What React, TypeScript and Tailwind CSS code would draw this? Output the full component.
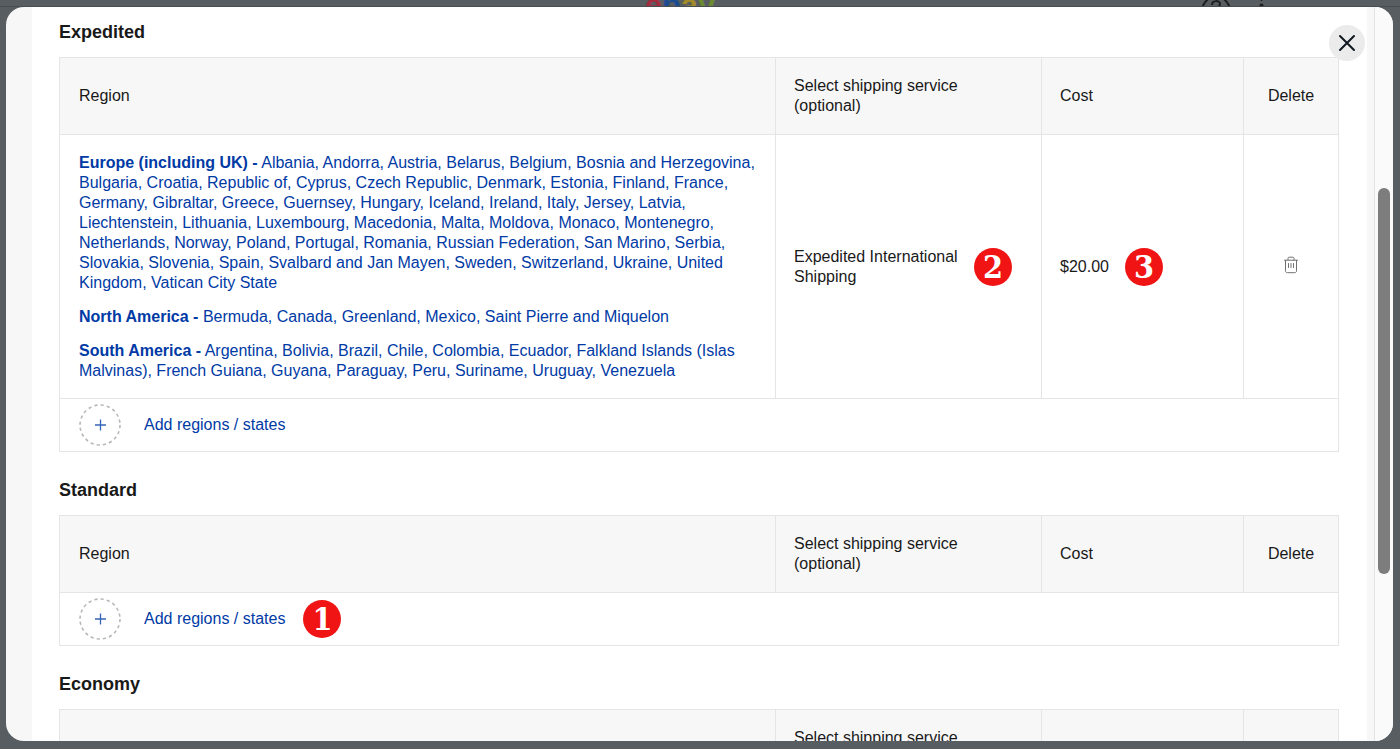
import React from 'react';

type Region = {
  name: string;
  places: string;
};

type Rate = {
  regions: Region[];
  service: string;
  cost: string;
};

const expeditedRate: Rate = {
  regions: [
    {
      name: 'Europe (including UK)',
      places: 'Albania, Andorra, Austria, Belarus, Belgium, Bosnia and Herzegovina, Bulgaria, Croatia, Republic of, Cyprus, Czech Republic, Denmark, Estonia, Finland, France, Germany, Gibraltar, Greece, Guernsey, Hungary, Iceland, Ireland, Italy, Jersey, Latvia, Liechtenstein, Lithuania, Luxembourg, Macedonia, Malta, Moldova, Monaco, Montenegro, Netherlands, Norway, Poland, Portugal, Romania, Russian Federation, San Marino, Serbia, Slovakia, Slovenia, Spain, Svalbard and Jan Mayen, Sweden, Switzerland, Ukraine, United Kingdom, Vatican City State',
    },
    {
      name: 'North America',
      places: 'Bermuda, Canada, Greenland, Mexico, Saint Pierre and Miquelon',
    },
    {
      name: 'South America',
      places: 'Argentina, Bolivia, Brazil, Chile, Colombia, Ecuador, Falkland Islands (Islas Malvinas), French Guiana, Guyana, Paraguay, Peru, Suriname, Uruguay, Venezuela',
    },
  ],
  service: 'Expedited International Shipping',
  cost: '$20.00',
};

const StepBadge = ({ step }: { step: number }) => (
  <span className="flex size-[38px] shrink-0 items-center justify-center rounded-full bg-[#f01414] font-['DejaVu_Serif_Condensed','DejaVu_Serif',serif] text-[32px] leading-[38px] font-bold text-white">
    {step}
  </span>
);

const TrashIcon = () => (
  <svg viewBox="0 0 16 18" className="h-[18px] w-4" fill="none" stroke="#707070" strokeLinecap="round">
    <path d="M1.5 4.2h13M5 4V2.4C5 1.6 5.5 1.2 6.2 1.2h3.6c.7 0 1.2.4 1.2 1.2V4M2.5 4.4v10.4c0 1.2.7 1.9 1.9 1.9h7.2c1.2 0 1.9-.7 1.9-1.9V4.4" />
    <path d="M5.5 7.5v4M8 7.5v4M10.5 7.5v4" />
  </svg>
);

const AddRegionIcon = () => (
  <svg viewBox="0 0 42 42" className="size-[42px] shrink-0" fill="none">
    <circle cx="21" cy="21" r="20" stroke="#b8b8b8" strokeWidth="1.6" strokeDasharray="3.2 3.08" />
    <path d="M21.5 15.5v11M16 21h11" stroke="#3665b8" strokeWidth="1.3" />
  </svg>
);

const RateSection = ({ title, rate, addStep }: { title: string; rate?: Rate; addStep?: number }) => (
  <section className="mb-[25px]">
    <h2 className="mb-[11px] text-lg leading-[27px] font-bold">{title}</h2>
    <table className="w-full table-fixed border-collapse border border-[#e5e5e5]">
      <colgroup>
        <col />
        <col className="w-[266px]" />
        <col className="w-[202px]" />
        <col className="w-[95px]" />
      </colgroup>
      <thead className="bg-[#f7f7f7] text-left">
        <tr className="h-[77px]">
          <th scope="col" className="border border-[#e5e5e5] px-[19px] font-normal">Region</th>
          <th scope="col" className="border border-[#e5e5e5] px-[18px] font-normal">Select shipping service (optional)</th>
          <th scope="col" className="border border-[#e5e5e5] px-[18px] font-normal">Cost</th>
          <th scope="col" className="border border-[#e5e5e5] text-center font-normal">Delete</th>
        </tr>
      </thead>
      <tbody>
        {rate &&
          <tr className="h-[264px]">
            <td className="border border-[#e5e5e5] px-[19px]">
              <div className="flex flex-col gap-[14px]">
                {rate.regions.map((region) => (
                  <a key={region.name} href="#" className="text-[#003aa5]">
                    <b>{region.name} -</b> {region.places}
                  </a>
                ))}
              </div>
            </td>
            <td className="border border-[#e5e5e5] px-[18px]">
              <div className="flex items-center gap-3">
                <span className="w-[168px]">{rate.service}</span>
                <StepBadge step={2} />
              </div>
            </td>
            <td className="border border-[#e5e5e5] px-[18px]">
              <div className="flex items-center gap-4">
                <span>{rate.cost}</span>
                <StepBadge step={3} />
              </div>
            </td>
            <td className="border border-[#e5e5e5]">
              <button type="button" aria-label="Delete" className="mx-auto block pb-1">
                <TrashIcon />
              </button>
            </td>
          </tr>
        }
        <tr className="h-[53px]">
          <td colSpan={4} className="border border-[#e5e5e5] px-[19px]">
            <div className="flex items-center gap-[18px]">
              <button type="button" className="flex items-center gap-[23px] text-[#003aa5]">
                <AddRegionIcon />
                Add regions / states
              </button>
              {addStep && <StepBadge step={addStep} />}
            </div>
          </td>
        </tr>
      </tbody>
    </table>
  </section>
);

// Dimmed page header that peeks out above the dialog
const PageHeader = () => (
  <header className="flex h-[7px] items-start overflow-hidden border-b border-[#484d52]">
    <div className="flex-1 pl-[90px]" />
    <div className="-mt-3 text-[31px] leading-9 font-bold">
      <span className="text-[#a32c3e]">e</span>
      <span className="text-[#1c4c90]">b</span>
      <span className="text-[#a08a2a]">a</span>
      <span className="text-[#6c8a30]">y</span>
    </div>
    <div className="flex flex-1 justify-end pr-[130px]">
      <svg viewBox="0 0 70 7" className="h-[7px] w-[70px]" fill="none" stroke="#1c1e20" strokeWidth="2">
        <path d="M2.5 7C4 3 6.5 0 9.5-2M29.5 7C28 3 25.5 0 22.5-2" />
        <path d="M12 5c0-5 8-5 8-1 0 1.5-1 2.5-2.5 3.5" />
        <circle cx="61.5" cy="0" r="1" fill="#1c1e20" stroke="none" />
        <circle cx="61.5" cy="5.5" r="2" fill="#1c1e20" stroke="none" />
      </svg>
    </div>
  </header>
);

const App = () => {
  return (
    <div className="relative h-screen overflow-hidden bg-[#585d61] font-['Liberation_Sans',Arial,sans-serif] text-base leading-5 text-[#191919]">
      <PageHeader />

      <div role="dialog" aria-label="Shipping rates" className="absolute inset-x-[6px] top-[7px] bottom-2 mr-px flex overflow-hidden rounded-[18px] bg-[#f7f7f7]">
        <main className="ml-[26px] mr-[7px] min-w-0 flex-1 overflow-hidden bg-white pt-3 pr-7 pl-[27px]">
          <RateSection title="Expedited" rate={expeditedRate} />
          <RateSection title="Standard" addStep={1} />
          <RateSection title="Economy" />
        </main>

        {/* Scrollbar */}
        <div className="w-[19px] shrink-0 border-l border-[#e4e4e4] bg-[#fafafa] pt-[181px]">
          <div className="mx-auto h-[386px] w-3 rounded-full bg-[#7d7d7d]" />
        </div>

        <button
          type="button"
          aria-label="Close"
          className="absolute top-[18px] right-7 flex size-9 items-center justify-center rounded-full bg-[#ebebeb]"
        >
          <svg viewBox="0 0 18 18" className="size-[18px]" fill="none" stroke="#111820" strokeWidth="2" strokeLinecap="round">
            <path d="M2 2l14 14M16 2L2 16" />
          </svg>
        </button>
      </div>
    </div>
  );
}

export default App;
